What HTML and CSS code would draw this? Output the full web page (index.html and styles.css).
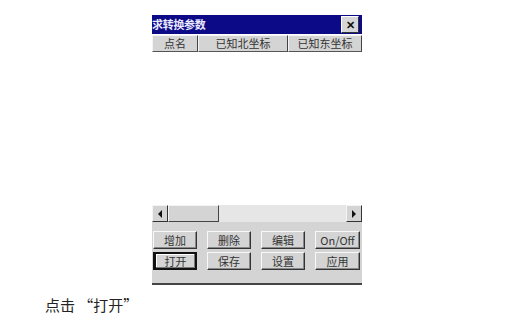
FILE: index.html
```html
<!DOCTYPE html>
<html>
<head>
<meta charset="utf-8">
<link rel="stylesheet" href="styles.css">
</head>
<body>
<div class="page">
  <div class="win">
    <div class="titlebar">
      <span class="title">求转换参数</span>
      <span class="close">✕</span>
    </div>
    <div class="header">
      <div class="hcell c1">点名</div>
      <div class="hcell c2">已知北坐标</div>
      <div class="hcell c3">已知东坐标</div>
    </div>
    <div class="list"></div>
    <div class="scroll">
      <div class="sbtn"><span class="tri left"></span></div>
      <div class="thumb"></div>
      <div class="track"></div>
      <div class="sbtn"><span class="tri right"></span></div>
    </div>
    <div class="panel">
      <div class="grid">
        <div class="btn">增加</div>
        <div class="btn">删除</div>
        <div class="btn">编辑</div>
        <div class="btn">On/Off</div>
        <div class="btn focus">打开</div>
        <div class="btn">保存</div>
        <div class="btn">设置</div>
        <div class="btn">应用</div>
      </div>
    </div>
  </div>
  <p class="caption">点击 “打开”</p>
</div>
</body>
</html>
```
FILE: styles.css
```css
html, body {
  margin: 0;
  padding: 0;
  background: #fff;
}
.page {
  width: 532px;
  height: 332px;
  padding-top: 15px;
  box-sizing: border-box;
  font-family: "Noto Sans CJK SC", "Noto Sans", sans-serif;
}
.win {
  margin-left: 152px;
  width: 210px;
  display: flex;
  flex-direction: column;
}
.titlebar {
  height: 19px;
  background: #0c0a86;
  display: flex;
  align-items: center;
  justify-content: space-between;
  padding-right: 3px;
}
.title {
  color: #e8e8ff;
  font-size: 11px;
  font-weight: bold;
  line-height: 19px;
  letter-spacing: -0.3px;
}
.close {
  width: 16px;
  height: 15px;
  background: #d6d6d6;
  border: 1px solid;
  border-color: #fff #333 #333 #fff;
  font-size: 11px;
  font-weight: bold;
  color: #111;
  display: flex;
  align-items: center;
  justify-content: center;
  line-height: 1;
}
.header {
  height: 17px;
  margin-top: 1px;
  display: flex;
  background: #d4d4d4;
}
.hcell {
  box-sizing: border-box;
  height: 17px;
  border: 1px solid;
  border-color: #f4f4f4 #444 #555 #f4f4f4;
  font-size: 11px;
  color: #333;
  line-height: 15px;
  text-align: center;
  white-space: nowrap;
  overflow: hidden;
}
.c1 { width: 46px; }
.c2 { width: 90px; }
.c3 { width: 74px; }
.list {
  height: 153px;
  background: #fff;
}
.scroll {
  height: 17px;
  display: flex;
  background: #e6e6e6;
}
.sbtn {
  box-sizing: border-box;
  width: 16px;
  height: 17px;
  background: #d4d4d4;
  border: 1px solid;
  border-color: #f4f4f4 #333 #333 #f4f4f4;
  display: flex;
  align-items: center;
  justify-content: center;
}
.tri {
  width: 0;
  height: 0;
  border-top: 4px solid transparent;
  border-bottom: 4px solid transparent;
}
.tri.left { border-right: 4px solid #111; }
.tri.right { border-left: 4px solid #111; }
.thumb {
  box-sizing: border-box;
  width: 51px;
  height: 17px;
  background: #d4d4d4;
  border: 1px solid;
  border-color: #f4f4f4 #444 #444 #f4f4f4;
}
.track { flex: 1; }
.panel {
  background: #d4d4d4;
  height: 52px;
  border-bottom: 2px solid #444;
  padding: 9px 3px 0 1px;
  box-sizing: content-box;
}
.grid {
  display: grid;
  grid-template-columns: 44px 44px 44px 45px;
  column-gap: 10px;
  row-gap: 3px;
  justify-content: space-between;
}
.btn {
  box-sizing: border-box;
  height: 18px;
  border: 1px solid;
  border-color: #f8f8f8 #333 #333 #f8f8f8;
  box-shadow: inset -1px -1px 0 #888;
  font-size: 11px;
  color: #333;
  line-height: 16px;
  text-align: center;
  font-family: "Noto Sans CJK SC", "Liberation Sans", sans-serif;
}
.btn.focus {
  border: 2px solid #111;
  border-left-width: 3px;
  line-height: 14px;
  box-shadow: inset -1px -1px 0 #777, inset 1px 1px 0 #fff;
}
.caption {
  margin: 10px 0 0 45px;
  font-size: 15px;
  color: #222;
  line-height: 20px;
}
```
